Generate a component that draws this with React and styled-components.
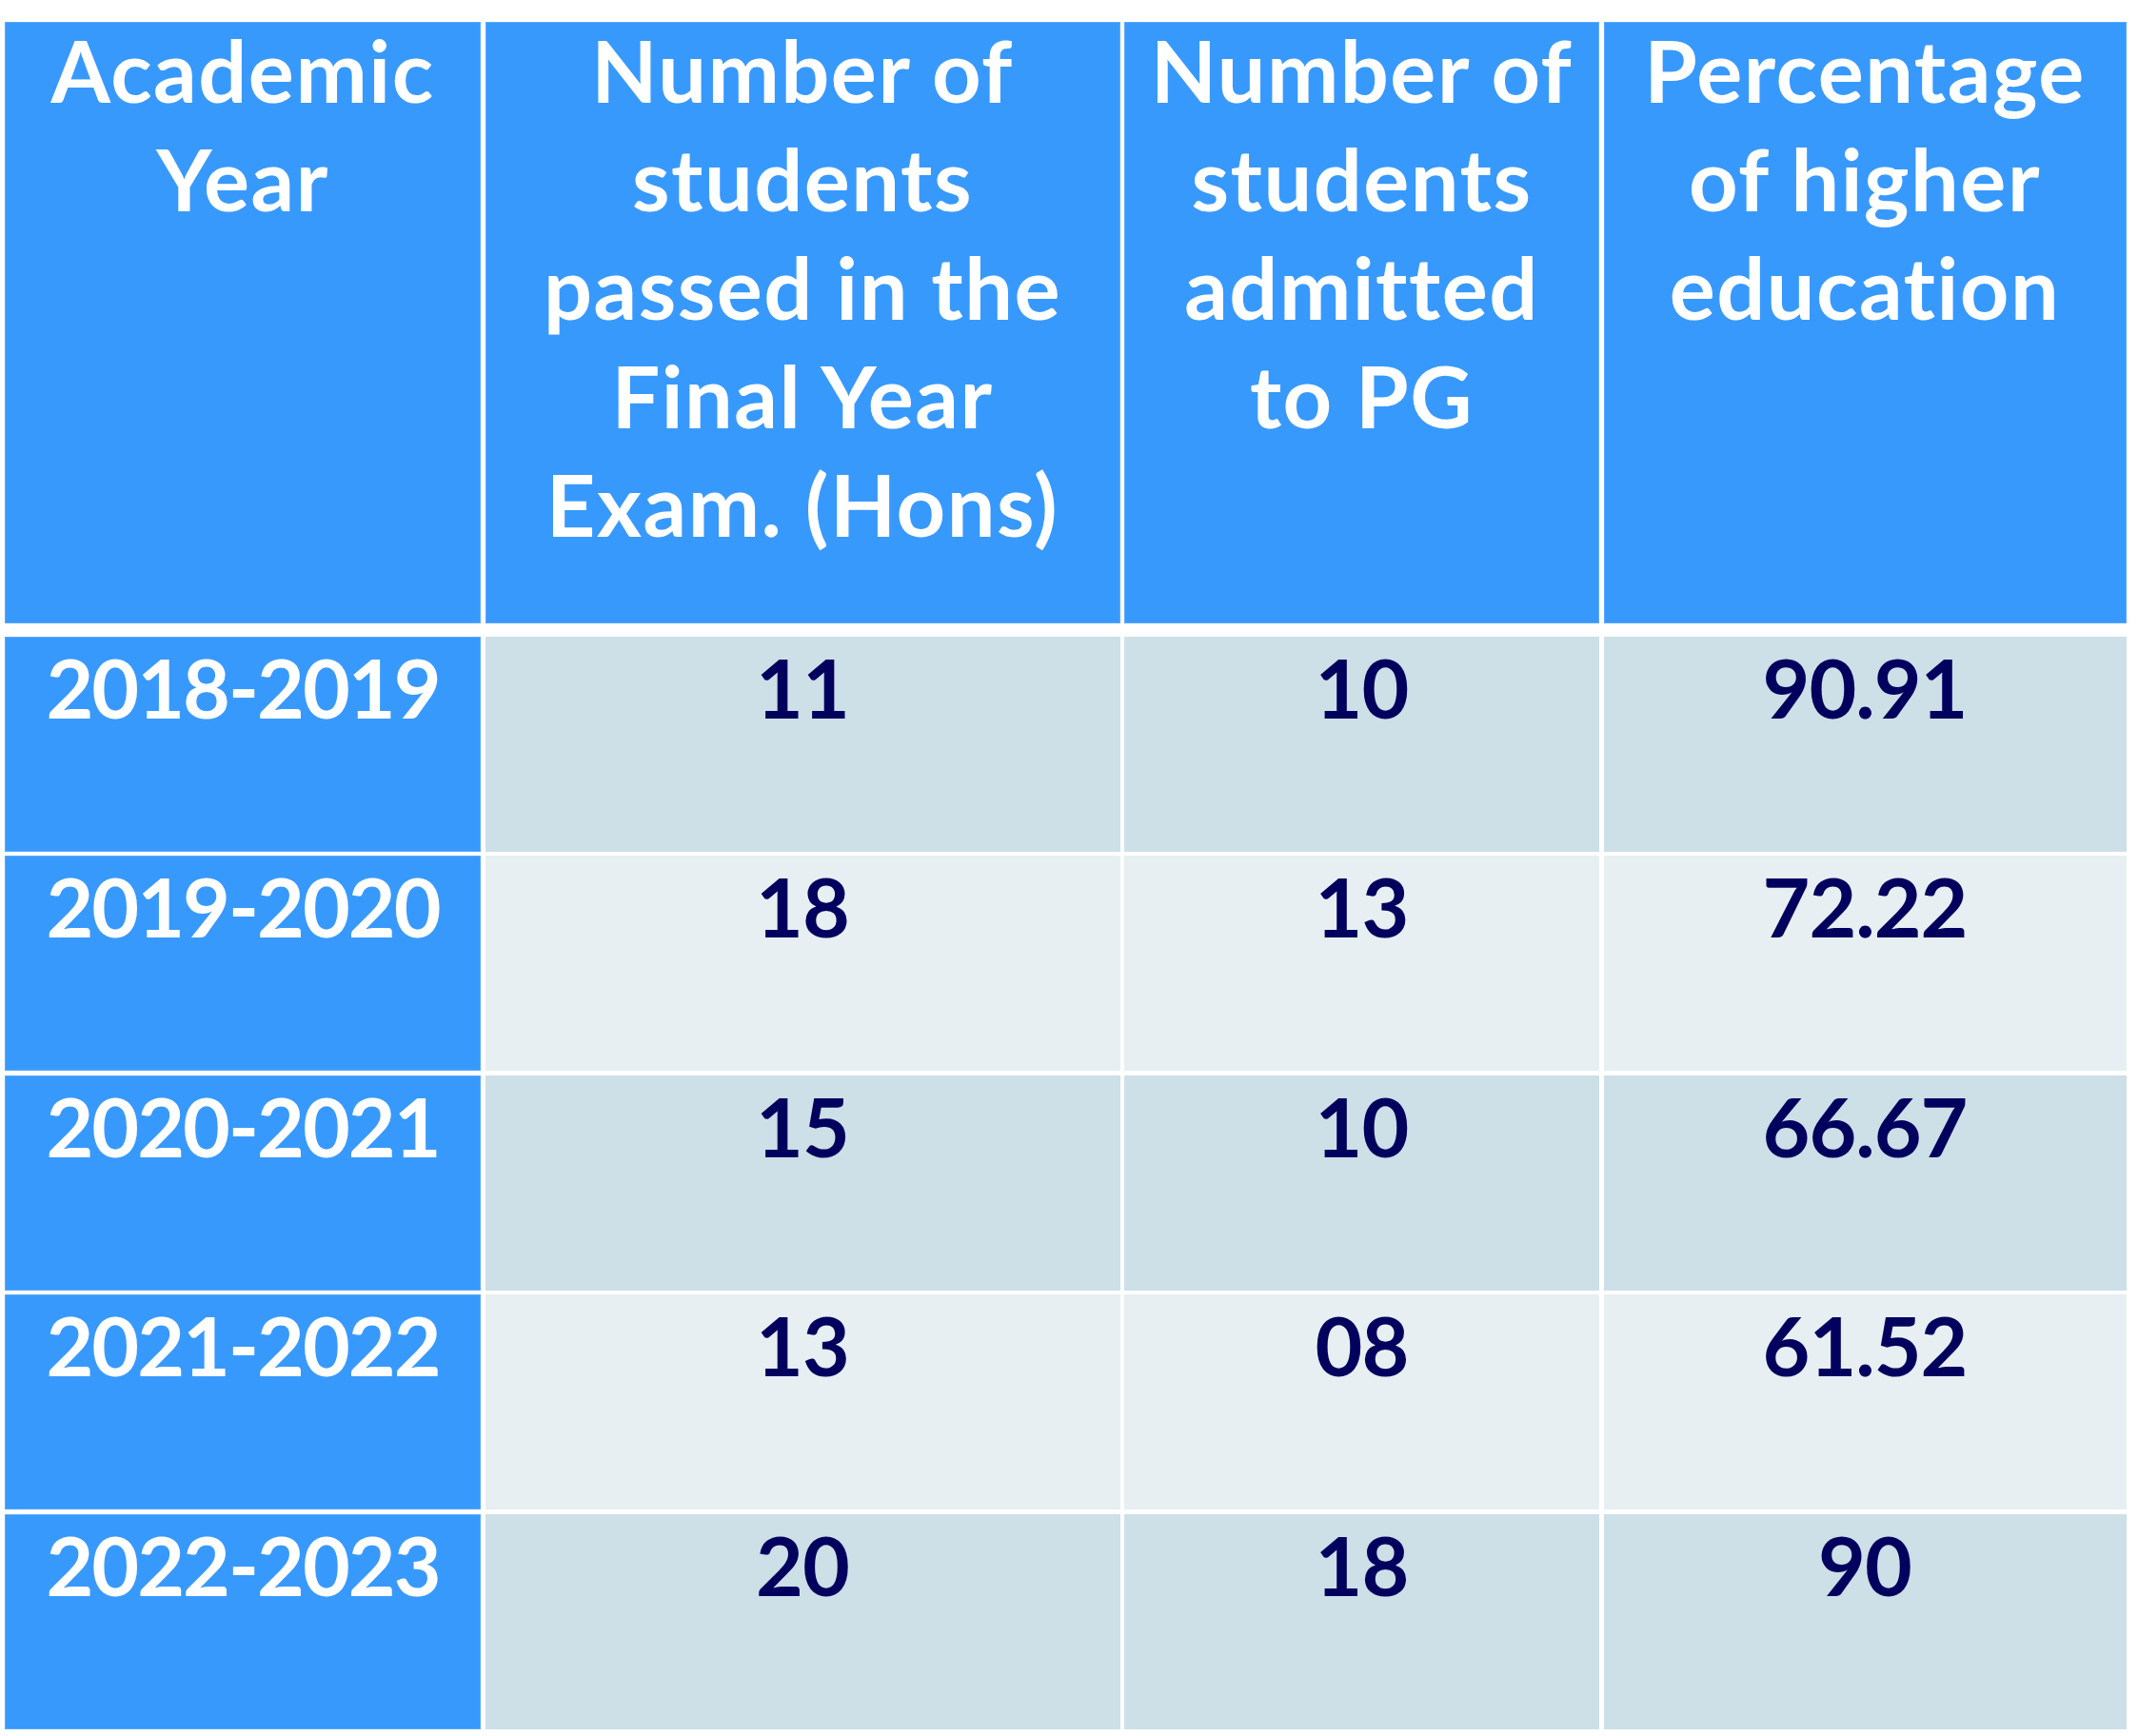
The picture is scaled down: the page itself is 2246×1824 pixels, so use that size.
import React from "react";
import styled, { createGlobalStyle } from "styled-components";

const GlobalStyle = createGlobalStyle`
  body {
    margin: 0;
    background: #ffffff;
  }
`;

const rows = [
  { year: "2018-2019", passed: "11", admitted: "10", percent: "90.91" },
  { year: "2019-2020", passed: "18", admitted: "13", percent: "72.22" },
  { year: "2020-2021", passed: "15", admitted: "10", percent: "66.67" },
  { year: "2021-2022", passed: "13", admitted: "08", percent: "61.52" },
  { year: "2022-2023", passed: "20", admitted: "18", percent: "90" },
];

const headers = [
  ["Academic", "Year"],
  ["Number of", "students", "passed in the", "Final Year", "Exam. (Hons)"],
  ["Number of", "students", "admitted", "to PG"],
  ["Percentage", "of higher", "education"],
];

const App = () => {
  return (
    <>
      <GlobalStyle />
      <Page>
        <Grid>
          {headers.map((lines, i) => (
            <HeadCell key={i}>
              {lines.map((line, j) => (
                <Line key={j}>{line}</Line>
              ))}
            </HeadCell>
          ))}
          {rows.map((row, idx) => (
            <React.Fragment key={row.year}>
              <YearCell>{row.year}</YearCell>
              <DataCell $odd={idx % 2 === 0}>{row.passed}</DataCell>
              <DataCell $odd={idx % 2 === 0}>{row.admitted}</DataCell>
              <DataCell $odd={idx % 2 === 0}>{row.percent}</DataCell>
            </React.Fragment>
          ))}
        </Grid>
      </Page>
    </>
  );
};

export default App;

const Page = styled.div`
  padding: 23px 0 8px 5px;
`;

const Grid = styled.div`
  display: grid;
  grid-template-columns: 500px 667px 499px 549px;
  grid-template-rows: 641px repeat(5, 226px);
  column-gap: 4.5px;
  row-gap: 4.5px;
  width: 2229px;
  font-family: "Lato", "DejaVu Sans", sans-serif;
  font-weight: 700;
`;

const Cell = styled.div`
  box-sizing: border-box;
  text-align: center;
`;

const HeadCell = styled(Cell)`
  background: #3899fd;
  color: #ffffff;
  margin-bottom: 9px;
  font-size: 90px;
  letter-spacing: 1.5px;
  box-shadow: inset 0 0 0 1px #5aaafc;
`;

const Line = styled.div`
  line-height: 100px;
  margin-bottom: 14px;
  white-space: nowrap;
`;

const YearCell = styled(Cell)`
  background: #3899fd;
  color: #ffffff;
  font-size: 86px;
  letter-spacing: -2px;
  line-height: 106px;
  box-shadow: inset 0 0 0 1px #5aaafc;
`;

const DataCell = styled(Cell)`
  background: ${(p) => (p.$odd ? "#cddfe7" : "#e7eff2")};
  color: #02025e;
  font-size: 86px;
  letter-spacing: -1px;
  line-height: 106px;
`;
